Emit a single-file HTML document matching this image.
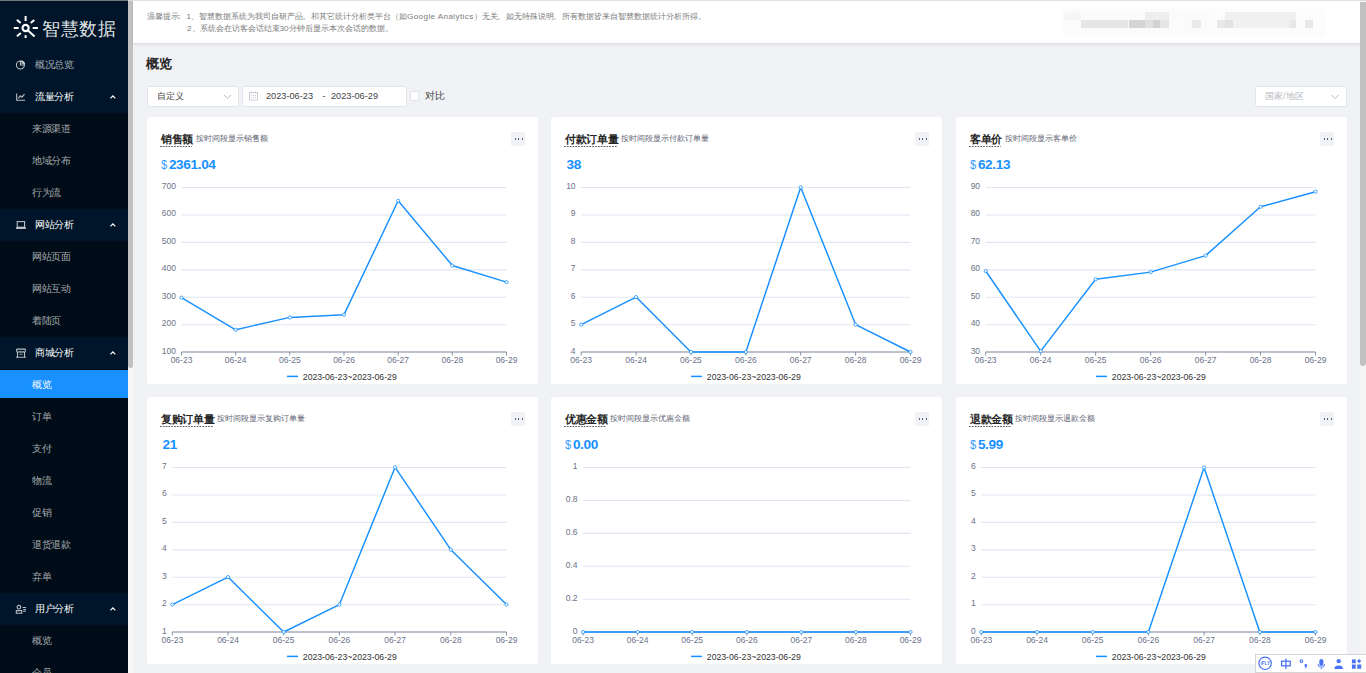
<!DOCTYPE html><html><head><meta charset="utf-8"><title>智慧数据</title><style>
*{box-sizing:border-box;margin:0;padding:0}
html,body{width:1366px;height:673px;overflow:hidden}
body{position:relative;background:#f0f2f5;font-family:"Liberation Sans",sans-serif;color:#262626}
.a{position:absolute;white-space:nowrap}
#topline{left:0;top:0;width:1366px;height:1px;background:rgba(200,200,200,.55);z-index:5}
#side{left:0;top:1px;width:127.5px;height:672px;box-shadow:0 -1px 0 #001529;background:#001529;overflow:hidden}
.sub{position:absolute;left:0;width:128px;background:#000c17}
.mi{position:absolute;left:0;width:128px;height:32px;line-height:32px;font-size:10px;letter-spacing:-0.5px;color:rgba(255,255,255,.65)}
.mt{color:#fff}
.sel{background:#1890ff;color:#fff}
#sscroll{left:127.5px;top:1px;width:5.7px;height:672px;background:#f7f7f7}
#sthumb{left:128px;top:1px;width:5px;height:366.5px;background:#c1c1c1;border-radius:0 0 2.5px 2.5px}
#pscroll{left:1360px;top:1px;width:6px;height:672px;background:#f5f5f5}
#pthumb{left:1360px;top:1.5px;width:6px;height:364px;background:#c1c1c1;border-radius:0 0 3px 3px}
#header{left:133px;top:0;width:1227px;height:44px;background:#fff;border-bottom:1px solid #dcdee2;box-shadow:0 1px 3px rgba(0,21,41,.08)}
.notice{font-size:8.1px;color:#7a7a7a;line-height:12px}.lat{letter-spacing:.4px}.pc{display:inline-block;width:8px;text-align:left}
.card{position:absolute;width:391px;height:267px;background:#fff;border-radius:3px}
.ct{position:absolute;font-size:10.5px;letter-spacing:-0.3px;font-weight:bold;color:#262626;line-height:13px;padding-bottom:0.5px}
.cs{position:absolute;font-size:8px;color:#5f6475;line-height:10px}
.more{position:absolute;width:13.5px;height:14px;background:#f0f2f5;border-radius:1px}
.dot{position:absolute;width:1.3px;height:1.7px;background:#5a6078}
.val{position:absolute;color:#1890ff;font-weight:bold;font-size:13.6px;line-height:14px;letter-spacing:-0.35px}
.dollar{display:inline-block;font-weight:normal;font-size:13.5px;width:6.5px;margin-right:1.8px;color:#3a9bff;letter-spacing:0;transform:scaleX(.82);transform-origin:left center}
svg{position:absolute;left:0;top:0;overflow:visible}
.box{position:absolute;background:#fff;border:1px solid #e3e6eb;border-radius:2px}
</style></head><body>
<div class="a" id="topline"></div>
<div class="a" id="side">
<svg width="128" height="60" style="left:0;top:-1px"><g stroke="#fff" stroke-width="2" fill="none" stroke-linecap="butt"><circle cx="25.6" cy="28" r="3.1" stroke-width="2.1"/><line x1="28" y1="30.5" x2="34.6" y2="36.4"/><line x1="25.6" y1="16" x2="25.6" y2="21"/><line x1="25.6" y1="35.2" x2="25.6" y2="38"/><line x1="13.8" y1="28" x2="18.7" y2="28"/><line x1="32.7" y1="28" x2="37.9" y2="28"/><line x1="16.9" y1="19.8" x2="20.6" y2="23"/><line x1="34.3" y1="20" x2="30.7" y2="23.1"/><line x1="16.9" y1="36.3" x2="20.9" y2="33"/></g></svg>
<div class="a" style="left:42.2px;top:17.8px;font-size:18px;letter-spacing:0.65px;line-height:20px;color:rgba(255,255,255,.9)">智慧数据</div>
<div class="sub" style="top:112px;height:96px"></div>
<div class="sub" style="top:240px;height:96px"></div>
<div class="sub" style="top:368px;height:224px"></div>
<div class="sub" style="top:624px;height:75px"></div>
<svg width="12" height="12" style="left:15px;top:58px" viewBox="0 0 12 12"><g fill="none" stroke="rgba(255,255,255,.72)" stroke-width="1.1"><circle cx="5.4" cy="6" r="4"/><path d="M5.4 2 V6 H9.4"/><path d="M6.4 1.2 A4.6 4.6 0 0 1 10.2 5 H6.4 Z" fill="rgba(255,255,255,.6)" stroke="none"/></g></svg>
<div class="mi" style="top:48px;padding-left:35px">概况总览</div>
<svg width="12" height="12" style="left:15px;top:90px" viewBox="0 0 12 12"><g fill="none" stroke="rgba(255,255,255,.72)" stroke-width="1.1"><path d="M1.7 2.5 V9.3 H10"/><path d="M3.2 7.3 L5.5 4.8 L7 6.2 L9.5 3.2"/></g></svg>
<div class="mi mt" style="top:80px;padding-left:35px">流量分析</div>
<svg width="8" height="6" style="left:108.5px;top:92.5px" viewBox="0 0 8 6"><path d="M1.5 4.4 L3.9 1.9 L6.3 4.4" stroke="#fff" stroke-width="1.2" fill="none"/></svg>
<svg width="12" height="12" style="left:15px;top:218px" viewBox="0 0 12 12"><g fill="none" stroke="rgba(255,255,255,.72)" stroke-width="1.1"><rect x="2.2" y="2.6" width="7.4" height="5.6"/><path d="M1 9.2 H11" stroke-width="1.6"/></g></svg>
<div class="mi mt" style="top:208px;padding-left:35px">网站分析</div>
<svg width="8" height="6" style="left:108.5px;top:220.5px" viewBox="0 0 8 6"><path d="M1.5 4.4 L3.9 1.9 L6.3 4.4" stroke="#fff" stroke-width="1.2" fill="none"/></svg>
<svg width="12" height="12" style="left:15px;top:346px" viewBox="0 0 12 12"><g fill="none" stroke="rgba(255,255,255,.72)" stroke-width="1.1"><path d="M1.6 4.6 V2.6 Q1.6 2.1 2.2 2.1 H9.8 Q10.4 2.1 10.4 2.6 V4.6"/><path d="M1.6 4.6 Q2.8 5.6 4 4.6 Q5.2 5.6 6 4.6 Q7.2 5.6 8.2 4.6 Q9.4 5.6 10.4 4.6"/><path d="M2.5 5.2 V10.2 M9.5 5.2 V10.2 M1 10.3 H11"/><path d="M4.5 7.3 H7.5" stroke-width="0.8"/></g></svg>
<div class="mi mt" style="top:336px;padding-left:35px">商城分析</div>
<svg width="8" height="6" style="left:108.5px;top:348.5px" viewBox="0 0 8 6"><path d="M1.5 4.4 L3.9 1.9 L6.3 4.4" stroke="#fff" stroke-width="1.2" fill="none"/></svg>
<svg width="12" height="12" style="left:15px;top:602px" viewBox="0 0 12 12"><g fill="none" stroke="rgba(255,255,255,.72)" stroke-width="1.1"><circle cx="3.9" cy="4.2" r="1.8"/><path d="M1.3 10.2 V7.6 H6.8 V10.2 Z"/><path d="M7.6 4.5 H11 M8.2 6.5 H11 M8.2 8.3 H11"/></g></svg>
<div class="mi mt" style="top:592px;padding-left:35px">用户分析</div>
<svg width="8" height="6" style="left:108.5px;top:604.5px" viewBox="0 0 8 6"><path d="M1.5 4.4 L3.9 1.9 L6.3 4.4" stroke="#fff" stroke-width="1.2" fill="none"/></svg>
<div class="mi" style="top:112px;padding-left:32px">来源渠道</div>
<div class="mi" style="top:144px;padding-left:32px">地域分布</div>
<div class="mi" style="top:176px;padding-left:32px">行为流</div>
<div class="mi" style="top:240px;padding-left:32px">网站页面</div>
<div class="mi" style="top:272px;padding-left:32px">网站互动</div>
<div class="mi" style="top:304px;padding-left:32px">着陆页</div>
<div class="a sel" style="left:0;top:369px;width:128px;height:28px"></div>
<div class="mi" style="top:368px;padding-left:32px;color:#fff">概览</div>
<div class="mi" style="top:400px;padding-left:32px">订单</div>
<div class="mi" style="top:432px;padding-left:32px">支付</div>
<div class="mi" style="top:464px;padding-left:32px">物流</div>
<div class="mi" style="top:496px;padding-left:32px">促销</div>
<div class="mi" style="top:528px;padding-left:32px">退货退款</div>
<div class="mi" style="top:560px;padding-left:32px">弃单</div>
<div class="mi" style="top:624px;padding-left:32px">概览</div>
<div class="mi" style="top:656px;padding-left:32px">会员</div>
</div>
<div class="a" id="sscroll"></div><div class="a" id="sthumb"></div>
<div class="a" id="header"></div>
<div class="a notice" style="left:146.5px;top:10.5px">温馨提示<span class="pc">:</span>1、智慧数据系统为我司自研产品<span class="pc">,</span>和其它统计分析类平台（如<span class="lat">Google Analytics</span>）无关<span class="pc">,</span>如无特殊说明<span class="pc">,</span>所有数据皆来自智慧数据统计分析所得。</div>
<div class="a notice" style="left:187px;top:22.5px">2、系统会在访客会话结束30分钟后显示本次会话的数据。</div>
<div class="a" style="left:1063px;top:9px;width:147px;height:28px;background:#fbfbfb"></div>
<div class="a" style="left:1210px;top:9px;width:115px;height:28px;background:#fcfcfc"></div>
<div class="a" style="left:1065px;top:12px;width:16px;height:8px;background:#f6f6f6"></div>
<div class="a" style="left:1144.5px;top:12px;width:24.5px;height:8px;background:#eeeeee"></div>
<div class="a" style="left:1225px;top:12px;width:71px;height:8px;background:#f0f0f0"></div>
<div class="a" style="left:1080.8px;top:20px;width:47.7px;height:8px;background:#e6e6e6"></div>
<div class="a" style="left:1128.5px;top:20px;width:16px;height:8px;background:#d5d5d5"></div>
<div class="a" style="left:1144.5px;top:20px;width:8.5px;height:8px;background:#e0e0e0"></div>
<div class="a" style="left:1153px;top:20px;width:7.4px;height:8px;background:#d2d2d2"></div>
<div class="a" style="left:1160.4px;top:20px;width:8.6px;height:8px;background:#e6e6e6"></div>
<div class="a" style="left:1184.8px;top:20px;width:7.2px;height:8px;background:#fafafa"></div>
<div class="a" style="left:1192px;top:20px;width:8.7px;height:8px;background:#eaeaea"></div>
<div class="a" style="left:1216.7px;top:20px;width:8.3px;height:8px;background:#e8e8e8"></div>
<div class="a" style="left:1225px;top:20px;width:7.6px;height:8px;background:#e2e2e2"></div>
<div class="a" style="left:1232.6px;top:20px;width:56.4px;height:8px;background:#f1f1f1"></div>
<div class="a" style="left:1289px;top:20px;width:7px;height:8px;background:#e8e8e8"></div>
<div class="a" style="left:1304.8px;top:20px;width:8.5px;height:8px;background:#e8e8e8"></div>
<div class="a" id="pscroll"></div><div class="a" id="pthumb"></div>
<div class="a" style="left:146px;top:56px;font-size:13px;font-weight:bold;line-height:16px;color:#262626">概览</div>
<div class="box" style="left:146.5px;top:85.5px;width:92px;height:21px"></div>
<div class="a" style="left:157px;top:90px;font-size:9px;line-height:12px;color:#444">自定义</div>
<svg width="10" height="6" style="left:223px;top:93.5px"><path d="M1 1 L4.5 4.3 L8 1" stroke="#b0b4c0" stroke-width="0.9" fill="none"/></svg>
<div class="box" style="left:241.5px;top:85.5px;width:165.5px;height:21px"></div>
<svg width="10" height="10" style="left:249px;top:91px"><g fill="none" stroke="#c0c4cc" stroke-width="0.8"><rect x="0.5" y="1.5" width="8" height="7.5"/><path d="M2.5 0.3 V2 M6.5 0.3 V2"/></g><g fill="#c8ccd4"><rect x="2" y="4" width="1" height="1"/><rect x="4" y="4" width="1" height="1"/><rect x="6" y="4" width="1" height="1"/><rect x="2" y="6" width="1" height="1"/><rect x="4" y="6" width="1" height="1"/><rect x="6" y="6" width="1" height="1"/></g></svg>
<div class="a" style="left:266px;top:90px;font-size:9.2px;line-height:12px;color:#444">2023-06-23</div>
<div class="a" style="left:322.5px;top:90px;font-size:9.2px;line-height:12px;color:#444">-</div>
<div class="a" style="left:331px;top:90px;font-size:9.2px;line-height:12px;color:#444">2023-06-29</div>
<div class="a" style="left:410px;top:91px;width:8.5px;height:9.8px;background:#fff;border:1px solid #e1e3e8;border-radius:1px"></div>
<div class="a" style="left:425px;top:89.5px;font-size:10px;line-height:12px;color:#444">对比</div>
<div class="box" style="left:1255px;top:85.5px;width:92px;height:21px"></div>
<div class="a" style="left:1265px;top:90px;font-size:9px;line-height:12px;color:#b5b8bf">国家/地区</div>
<svg width="10" height="6" style="left:1330px;top:94px"><path d="M1 1 L5 4.5 L9 1" stroke="#b8bcc6" stroke-width="0.9" fill="none"/></svg>
<div class="card" style="left:147px;top:117px"></div>
<div class="ct" style="left:161px;top:133px">销售额</div>
<svg width="32.8" height="3" style="left:160.1px;top:145px"><line x1="0" y1="1.5" x2="31.799999999999994" y2="1.5" stroke="#5c5c5c" stroke-width="1" stroke-dasharray="1.7 1.13"/></svg>
<div class="cs" style="left:195.6px;top:134px">按时间段显示销售额</div>
<div class="more" style="left:511px;top:132px"></div>
<div class="dot" style="left:514.5px;top:138.3px"></div>
<div class="dot" style="left:518.0px;top:138.3px"></div>
<div class="dot" style="left:521.5px;top:138.3px"></div>
<div class="val" style="left:160.6px;top:158px"><span class="dollar">$</span>2361.04</div>
<svg width="1366" height="673" style="left:0;top:0;pointer-events:none"><text x="175.90" y="353.50" font-size="8.5" fill="#6c7288" text-anchor="end" font-family="Liberation Sans">100</text><line x1="181.50" y1="324.75" x2="506.50" y2="324.75" stroke="#e0e6f1" stroke-width="1.1"/><text x="175.90" y="326.05" font-size="8.5" fill="#6c7288" text-anchor="end" font-family="Liberation Sans">200</text><line x1="181.50" y1="297.30" x2="506.50" y2="297.30" stroke="#e0e6f1" stroke-width="1.1"/><text x="175.90" y="298.60" font-size="8.5" fill="#6c7288" text-anchor="end" font-family="Liberation Sans">300</text><line x1="181.50" y1="269.85" x2="506.50" y2="269.85" stroke="#e0e6f1" stroke-width="1.1"/><text x="175.90" y="271.15" font-size="8.5" fill="#6c7288" text-anchor="end" font-family="Liberation Sans">400</text><line x1="181.50" y1="242.40" x2="506.50" y2="242.40" stroke="#e0e6f1" stroke-width="1.1"/><text x="175.90" y="243.70" font-size="8.5" fill="#6c7288" text-anchor="end" font-family="Liberation Sans">500</text><line x1="181.50" y1="214.95" x2="506.50" y2="214.95" stroke="#e0e6f1" stroke-width="1.1"/><text x="175.90" y="216.25" font-size="8.5" fill="#6c7288" text-anchor="end" font-family="Liberation Sans">600</text><line x1="181.50" y1="187.50" x2="506.50" y2="187.50" stroke="#e0e6f1" stroke-width="1.1"/><text x="175.90" y="188.80" font-size="8.5" fill="#6c7288" text-anchor="end" font-family="Liberation Sans">700</text><line x1="181.50" y1="352.00" x2="506.50" y2="352.00" stroke="#7a8399" stroke-width="1"/><line x1="181.50" y1="352.00" x2="181.50" y2="355.50" stroke="#7a8399" stroke-width="0.9"/><text x="181.50" y="363.00" font-size="8.5" fill="#6c7288" text-anchor="middle" font-family="Liberation Sans">06-23</text><line x1="235.67" y1="352.00" x2="235.67" y2="355.50" stroke="#7a8399" stroke-width="0.9"/><text x="235.67" y="363.00" font-size="8.5" fill="#6c7288" text-anchor="middle" font-family="Liberation Sans">06-24</text><line x1="289.83" y1="352.00" x2="289.83" y2="355.50" stroke="#7a8399" stroke-width="0.9"/><text x="289.83" y="363.00" font-size="8.5" fill="#6c7288" text-anchor="middle" font-family="Liberation Sans">06-25</text><line x1="344.00" y1="352.00" x2="344.00" y2="355.50" stroke="#7a8399" stroke-width="0.9"/><text x="344.00" y="363.00" font-size="8.5" fill="#6c7288" text-anchor="middle" font-family="Liberation Sans">06-26</text><line x1="398.17" y1="352.00" x2="398.17" y2="355.50" stroke="#7a8399" stroke-width="0.9"/><text x="398.17" y="363.00" font-size="8.5" fill="#6c7288" text-anchor="middle" font-family="Liberation Sans">06-27</text><line x1="452.33" y1="352.00" x2="452.33" y2="355.50" stroke="#7a8399" stroke-width="0.9"/><text x="452.33" y="363.00" font-size="8.5" fill="#6c7288" text-anchor="middle" font-family="Liberation Sans">06-28</text><line x1="506.50" y1="352.00" x2="506.50" y2="355.50" stroke="#7a8399" stroke-width="0.9"/><text x="506.50" y="363.00" font-size="8.5" fill="#6c7288" text-anchor="middle" font-family="Liberation Sans">06-29</text><polyline points="181.50,297.65 235.67,329.77 289.83,317.41 344.00,314.67 398.17,200.75 452.33,265.53 506.50,282.14" fill="none" stroke="#1890ff" stroke-width="1.45" stroke-linejoin="bevel"/><circle cx="181.50" cy="297.65" r="1.6" fill="#fff" stroke="#1890ff" stroke-width="0.8"/><circle cx="235.67" cy="329.77" r="1.6" fill="#fff" stroke="#1890ff" stroke-width="0.8"/><circle cx="289.83" cy="317.41" r="1.6" fill="#fff" stroke="#1890ff" stroke-width="0.8"/><circle cx="344.00" cy="314.67" r="1.6" fill="#fff" stroke="#1890ff" stroke-width="0.8"/><circle cx="398.17" cy="200.75" r="1.6" fill="#fff" stroke="#1890ff" stroke-width="0.8"/><circle cx="452.33" cy="265.53" r="1.6" fill="#fff" stroke="#1890ff" stroke-width="0.8"/><circle cx="506.50" cy="282.14" r="1.6" fill="#fff" stroke="#1890ff" stroke-width="0.8"/><line x1="287.00" y1="376.40" x2="298.00" y2="376.40" stroke="#1890ff" stroke-width="1.5"/><text x="302.80" y="379.50" font-size="8.7" fill="#333" font-family="Liberation Sans">2023-06-23~2023-06-29</text></svg>
<div class="card" style="left:551px;top:117px"></div>
<div class="ct" style="left:565px;top:133px">付款订单量</div>
<svg width="54.2" height="3" style="left:564.1px;top:145px"><line x1="0" y1="1.5" x2="53.2" y2="1.5" stroke="#5c5c5c" stroke-width="1" stroke-dasharray="1.7 1.13"/></svg>
<div class="cs" style="left:621.0px;top:134px">按时间段显示付款订单量</div>
<div class="more" style="left:915px;top:132px"></div>
<div class="dot" style="left:918.5px;top:138.3px"></div>
<div class="dot" style="left:922.0px;top:138.3px"></div>
<div class="dot" style="left:925.5px;top:138.3px"></div>
<div class="val" style="left:566.5px;top:158px">38</div>
<svg width="1366" height="673" style="left:0;top:0;pointer-events:none"><text x="575.60" y="353.50" font-size="8.5" fill="#6c7288" text-anchor="end" font-family="Liberation Sans">4</text><line x1="581.20" y1="324.75" x2="910.50" y2="324.75" stroke="#e0e6f1" stroke-width="1.1"/><text x="575.60" y="326.05" font-size="8.5" fill="#6c7288" text-anchor="end" font-family="Liberation Sans">5</text><line x1="581.20" y1="297.30" x2="910.50" y2="297.30" stroke="#e0e6f1" stroke-width="1.1"/><text x="575.60" y="298.60" font-size="8.5" fill="#6c7288" text-anchor="end" font-family="Liberation Sans">6</text><line x1="581.20" y1="269.85" x2="910.50" y2="269.85" stroke="#e0e6f1" stroke-width="1.1"/><text x="575.60" y="271.15" font-size="8.5" fill="#6c7288" text-anchor="end" font-family="Liberation Sans">7</text><line x1="581.20" y1="242.40" x2="910.50" y2="242.40" stroke="#e0e6f1" stroke-width="1.1"/><text x="575.60" y="243.70" font-size="8.5" fill="#6c7288" text-anchor="end" font-family="Liberation Sans">8</text><line x1="581.20" y1="214.95" x2="910.50" y2="214.95" stroke="#e0e6f1" stroke-width="1.1"/><text x="575.60" y="216.25" font-size="8.5" fill="#6c7288" text-anchor="end" font-family="Liberation Sans">9</text><line x1="581.20" y1="187.50" x2="910.50" y2="187.50" stroke="#e0e6f1" stroke-width="1.1"/><text x="575.60" y="188.80" font-size="8.5" fill="#6c7288" text-anchor="end" font-family="Liberation Sans">10</text><line x1="581.20" y1="352.00" x2="910.50" y2="352.00" stroke="#7a8399" stroke-width="1"/><line x1="581.20" y1="352.00" x2="581.20" y2="355.50" stroke="#7a8399" stroke-width="0.9"/><text x="581.20" y="363.00" font-size="8.5" fill="#6c7288" text-anchor="middle" font-family="Liberation Sans">06-23</text><line x1="636.08" y1="352.00" x2="636.08" y2="355.50" stroke="#7a8399" stroke-width="0.9"/><text x="636.08" y="363.00" font-size="8.5" fill="#6c7288" text-anchor="middle" font-family="Liberation Sans">06-24</text><line x1="690.97" y1="352.00" x2="690.97" y2="355.50" stroke="#7a8399" stroke-width="0.9"/><text x="690.97" y="363.00" font-size="8.5" fill="#6c7288" text-anchor="middle" font-family="Liberation Sans">06-25</text><line x1="745.85" y1="352.00" x2="745.85" y2="355.50" stroke="#7a8399" stroke-width="0.9"/><text x="745.85" y="363.00" font-size="8.5" fill="#6c7288" text-anchor="middle" font-family="Liberation Sans">06-26</text><line x1="800.73" y1="352.00" x2="800.73" y2="355.50" stroke="#7a8399" stroke-width="0.9"/><text x="800.73" y="363.00" font-size="8.5" fill="#6c7288" text-anchor="middle" font-family="Liberation Sans">06-27</text><line x1="855.62" y1="352.00" x2="855.62" y2="355.50" stroke="#7a8399" stroke-width="0.9"/><text x="855.62" y="363.00" font-size="8.5" fill="#6c7288" text-anchor="middle" font-family="Liberation Sans">06-28</text><line x1="910.50" y1="352.00" x2="910.50" y2="355.50" stroke="#7a8399" stroke-width="0.9"/><text x="910.50" y="363.00" font-size="8.5" fill="#6c7288" text-anchor="middle" font-family="Liberation Sans">06-29</text><polyline points="581.20,324.55 636.08,297.10 690.97,352.00 745.85,352.00 800.73,187.30 855.62,324.55 910.50,352.00" fill="none" stroke="#1890ff" stroke-width="1.45" stroke-linejoin="bevel"/><circle cx="581.20" cy="324.55" r="1.6" fill="#fff" stroke="#1890ff" stroke-width="0.8"/><circle cx="636.08" cy="297.10" r="1.6" fill="#fff" stroke="#1890ff" stroke-width="0.8"/><circle cx="690.97" cy="352.00" r="1.6" fill="#fff" stroke="#1890ff" stroke-width="0.8"/><circle cx="745.85" cy="352.00" r="1.6" fill="#fff" stroke="#1890ff" stroke-width="0.8"/><circle cx="800.73" cy="187.30" r="1.6" fill="#fff" stroke="#1890ff" stroke-width="0.8"/><circle cx="855.62" cy="324.55" r="1.6" fill="#fff" stroke="#1890ff" stroke-width="0.8"/><circle cx="910.50" cy="352.00" r="1.6" fill="#fff" stroke="#1890ff" stroke-width="0.8"/><line x1="691.00" y1="376.40" x2="702.00" y2="376.40" stroke="#1890ff" stroke-width="1.5"/><text x="706.80" y="379.50" font-size="8.7" fill="#333" font-family="Liberation Sans">2023-06-23~2023-06-29</text></svg>
<div class="card" style="left:956px;top:117px"></div>
<div class="ct" style="left:970px;top:133px">客单价</div>
<svg width="32.8" height="3" style="left:969.1px;top:145px"><line x1="0" y1="1.5" x2="31.799999999999994" y2="1.5" stroke="#5c5c5c" stroke-width="1" stroke-dasharray="1.7 1.13"/></svg>
<div class="cs" style="left:1004.6px;top:134px">按时间段显示客单价</div>
<div class="more" style="left:1320px;top:132px"></div>
<div class="dot" style="left:1323.5px;top:138.3px"></div>
<div class="dot" style="left:1327.0px;top:138.3px"></div>
<div class="dot" style="left:1330.5px;top:138.3px"></div>
<div class="val" style="left:969.6px;top:158px"><span class="dollar">$</span>62.13</div>
<svg width="1366" height="673" style="left:0;top:0;pointer-events:none"><text x="980.10" y="353.50" font-size="8.5" fill="#6c7288" text-anchor="end" font-family="Liberation Sans">30</text><line x1="985.70" y1="324.75" x2="1315.50" y2="324.75" stroke="#e0e6f1" stroke-width="1.1"/><text x="980.10" y="326.05" font-size="8.5" fill="#6c7288" text-anchor="end" font-family="Liberation Sans">40</text><line x1="985.70" y1="297.30" x2="1315.50" y2="297.30" stroke="#e0e6f1" stroke-width="1.1"/><text x="980.10" y="298.60" font-size="8.5" fill="#6c7288" text-anchor="end" font-family="Liberation Sans">50</text><line x1="985.70" y1="269.85" x2="1315.50" y2="269.85" stroke="#e0e6f1" stroke-width="1.1"/><text x="980.10" y="271.15" font-size="8.5" fill="#6c7288" text-anchor="end" font-family="Liberation Sans">60</text><line x1="985.70" y1="242.40" x2="1315.50" y2="242.40" stroke="#e0e6f1" stroke-width="1.1"/><text x="980.10" y="243.70" font-size="8.5" fill="#6c7288" text-anchor="end" font-family="Liberation Sans">70</text><line x1="985.70" y1="214.95" x2="1315.50" y2="214.95" stroke="#e0e6f1" stroke-width="1.1"/><text x="980.10" y="216.25" font-size="8.5" fill="#6c7288" text-anchor="end" font-family="Liberation Sans">80</text><line x1="985.70" y1="187.50" x2="1315.50" y2="187.50" stroke="#e0e6f1" stroke-width="1.1"/><text x="980.10" y="188.80" font-size="8.5" fill="#6c7288" text-anchor="end" font-family="Liberation Sans">90</text><line x1="985.70" y1="352.00" x2="1315.50" y2="352.00" stroke="#7a8399" stroke-width="1"/><line x1="985.70" y1="352.00" x2="985.70" y2="355.50" stroke="#7a8399" stroke-width="0.9"/><text x="985.70" y="363.00" font-size="8.5" fill="#6c7288" text-anchor="middle" font-family="Liberation Sans">06-23</text><line x1="1040.67" y1="352.00" x2="1040.67" y2="355.50" stroke="#7a8399" stroke-width="0.9"/><text x="1040.67" y="363.00" font-size="8.5" fill="#6c7288" text-anchor="middle" font-family="Liberation Sans">06-24</text><line x1="1095.63" y1="352.00" x2="1095.63" y2="355.50" stroke="#7a8399" stroke-width="0.9"/><text x="1095.63" y="363.00" font-size="8.5" fill="#6c7288" text-anchor="middle" font-family="Liberation Sans">06-25</text><line x1="1150.60" y1="352.00" x2="1150.60" y2="355.50" stroke="#7a8399" stroke-width="0.9"/><text x="1150.60" y="363.00" font-size="8.5" fill="#6c7288" text-anchor="middle" font-family="Liberation Sans">06-26</text><line x1="1205.57" y1="352.00" x2="1205.57" y2="355.50" stroke="#7a8399" stroke-width="0.9"/><text x="1205.57" y="363.00" font-size="8.5" fill="#6c7288" text-anchor="middle" font-family="Liberation Sans">06-27</text><line x1="1260.53" y1="352.00" x2="1260.53" y2="355.50" stroke="#7a8399" stroke-width="0.9"/><text x="1260.53" y="363.00" font-size="8.5" fill="#6c7288" text-anchor="middle" font-family="Liberation Sans">06-28</text><line x1="1315.50" y1="352.00" x2="1315.50" y2="355.50" stroke="#7a8399" stroke-width="0.9"/><text x="1315.50" y="363.00" font-size="8.5" fill="#6c7288" text-anchor="middle" font-family="Liberation Sans">06-29</text><polyline points="985.70,271.02 1040.67,351.18 1095.63,279.26 1150.60,272.12 1205.57,255.65 1260.53,206.79 1315.50,191.69" fill="none" stroke="#1890ff" stroke-width="1.45" stroke-linejoin="bevel"/><circle cx="985.70" cy="271.02" r="1.6" fill="#fff" stroke="#1890ff" stroke-width="0.8"/><circle cx="1040.67" cy="351.18" r="1.6" fill="#fff" stroke="#1890ff" stroke-width="0.8"/><circle cx="1095.63" cy="279.26" r="1.6" fill="#fff" stroke="#1890ff" stroke-width="0.8"/><circle cx="1150.60" cy="272.12" r="1.6" fill="#fff" stroke="#1890ff" stroke-width="0.8"/><circle cx="1205.57" cy="255.65" r="1.6" fill="#fff" stroke="#1890ff" stroke-width="0.8"/><circle cx="1260.53" cy="206.79" r="1.6" fill="#fff" stroke="#1890ff" stroke-width="0.8"/><circle cx="1315.50" cy="191.69" r="1.6" fill="#fff" stroke="#1890ff" stroke-width="0.8"/><line x1="1096.00" y1="376.40" x2="1107.00" y2="376.40" stroke="#1890ff" stroke-width="1.5"/><text x="1111.80" y="379.50" font-size="8.7" fill="#333" font-family="Liberation Sans">2023-06-23~2023-06-29</text></svg>
<div class="card" style="left:147px;top:397px"></div>
<div class="ct" style="left:161px;top:413px">复购订单量</div>
<svg width="54.2" height="3" style="left:160.1px;top:425px"><line x1="0" y1="1.5" x2="53.2" y2="1.5" stroke="#5c5c5c" stroke-width="1" stroke-dasharray="1.7 1.13"/></svg>
<div class="cs" style="left:217.0px;top:414px">按时间段显示复购订单量</div>
<div class="more" style="left:511px;top:412px"></div>
<div class="dot" style="left:514.5px;top:418.3px"></div>
<div class="dot" style="left:518.0px;top:418.3px"></div>
<div class="dot" style="left:521.5px;top:418.3px"></div>
<div class="val" style="left:162.5px;top:438px">21</div>
<svg width="1366" height="673" style="left:0;top:0;pointer-events:none"><text x="166.70" y="633.50" font-size="8.5" fill="#6c7288" text-anchor="end" font-family="Liberation Sans">1</text><line x1="172.30" y1="604.75" x2="506.50" y2="604.75" stroke="#e0e6f1" stroke-width="1.1"/><text x="166.70" y="606.05" font-size="8.5" fill="#6c7288" text-anchor="end" font-family="Liberation Sans">2</text><line x1="172.30" y1="577.30" x2="506.50" y2="577.30" stroke="#e0e6f1" stroke-width="1.1"/><text x="166.70" y="578.60" font-size="8.5" fill="#6c7288" text-anchor="end" font-family="Liberation Sans">3</text><line x1="172.30" y1="549.85" x2="506.50" y2="549.85" stroke="#e0e6f1" stroke-width="1.1"/><text x="166.70" y="551.15" font-size="8.5" fill="#6c7288" text-anchor="end" font-family="Liberation Sans">4</text><line x1="172.30" y1="522.40" x2="506.50" y2="522.40" stroke="#e0e6f1" stroke-width="1.1"/><text x="166.70" y="523.70" font-size="8.5" fill="#6c7288" text-anchor="end" font-family="Liberation Sans">5</text><line x1="172.30" y1="494.95" x2="506.50" y2="494.95" stroke="#e0e6f1" stroke-width="1.1"/><text x="166.70" y="496.25" font-size="8.5" fill="#6c7288" text-anchor="end" font-family="Liberation Sans">6</text><line x1="172.30" y1="467.50" x2="506.50" y2="467.50" stroke="#e0e6f1" stroke-width="1.1"/><text x="166.70" y="468.80" font-size="8.5" fill="#6c7288" text-anchor="end" font-family="Liberation Sans">7</text><line x1="172.30" y1="632.00" x2="506.50" y2="632.00" stroke="#7a8399" stroke-width="1"/><line x1="172.30" y1="632.00" x2="172.30" y2="635.50" stroke="#7a8399" stroke-width="0.9"/><text x="172.30" y="643.00" font-size="8.5" fill="#6c7288" text-anchor="middle" font-family="Liberation Sans">06-23</text><line x1="228.00" y1="632.00" x2="228.00" y2="635.50" stroke="#7a8399" stroke-width="0.9"/><text x="228.00" y="643.00" font-size="8.5" fill="#6c7288" text-anchor="middle" font-family="Liberation Sans">06-24</text><line x1="283.70" y1="632.00" x2="283.70" y2="635.50" stroke="#7a8399" stroke-width="0.9"/><text x="283.70" y="643.00" font-size="8.5" fill="#6c7288" text-anchor="middle" font-family="Liberation Sans">06-25</text><line x1="339.40" y1="632.00" x2="339.40" y2="635.50" stroke="#7a8399" stroke-width="0.9"/><text x="339.40" y="643.00" font-size="8.5" fill="#6c7288" text-anchor="middle" font-family="Liberation Sans">06-26</text><line x1="395.10" y1="632.00" x2="395.10" y2="635.50" stroke="#7a8399" stroke-width="0.9"/><text x="395.10" y="643.00" font-size="8.5" fill="#6c7288" text-anchor="middle" font-family="Liberation Sans">06-27</text><line x1="450.80" y1="632.00" x2="450.80" y2="635.50" stroke="#7a8399" stroke-width="0.9"/><text x="450.80" y="643.00" font-size="8.5" fill="#6c7288" text-anchor="middle" font-family="Liberation Sans">06-28</text><line x1="506.50" y1="632.00" x2="506.50" y2="635.50" stroke="#7a8399" stroke-width="0.9"/><text x="506.50" y="643.00" font-size="8.5" fill="#6c7288" text-anchor="middle" font-family="Liberation Sans">06-29</text><polyline points="172.30,604.55 228.00,577.10 283.70,632.00 339.40,604.55 395.10,467.30 450.80,549.65 506.50,604.55" fill="none" stroke="#1890ff" stroke-width="1.45" stroke-linejoin="bevel"/><circle cx="172.30" cy="604.55" r="1.6" fill="#fff" stroke="#1890ff" stroke-width="0.8"/><circle cx="228.00" cy="577.10" r="1.6" fill="#fff" stroke="#1890ff" stroke-width="0.8"/><circle cx="283.70" cy="632.00" r="1.6" fill="#fff" stroke="#1890ff" stroke-width="0.8"/><circle cx="339.40" cy="604.55" r="1.6" fill="#fff" stroke="#1890ff" stroke-width="0.8"/><circle cx="395.10" cy="467.30" r="1.6" fill="#fff" stroke="#1890ff" stroke-width="0.8"/><circle cx="450.80" cy="549.65" r="1.6" fill="#fff" stroke="#1890ff" stroke-width="0.8"/><circle cx="506.50" cy="604.55" r="1.6" fill="#fff" stroke="#1890ff" stroke-width="0.8"/><line x1="287.00" y1="656.40" x2="298.00" y2="656.40" stroke="#1890ff" stroke-width="1.5"/><text x="302.80" y="659.50" font-size="8.7" fill="#333" font-family="Liberation Sans">2023-06-23~2023-06-29</text></svg>
<div class="card" style="left:551px;top:397px"></div>
<div class="ct" style="left:565px;top:413px">优惠金额</div>
<svg width="43.5" height="3" style="left:564.1px;top:425px"><line x1="0" y1="1.5" x2="42.5" y2="1.5" stroke="#5c5c5c" stroke-width="1" stroke-dasharray="1.7 1.13"/></svg>
<div class="cs" style="left:610.3px;top:414px">按时间段显示优惠金额</div>
<div class="more" style="left:915px;top:412px"></div>
<div class="dot" style="left:918.5px;top:418.3px"></div>
<div class="dot" style="left:922.0px;top:418.3px"></div>
<div class="dot" style="left:925.5px;top:418.3px"></div>
<div class="val" style="left:564.6px;top:438px"><span class="dollar">$</span>0.00</div>
<svg width="1366" height="673" style="left:0;top:0;pointer-events:none"><text x="577.50" y="633.50" font-size="8.5" fill="#6c7288" text-anchor="end" font-family="Liberation Sans">0</text><line x1="583.10" y1="599.26" x2="910.50" y2="599.26" stroke="#e0e6f1" stroke-width="1.1"/><text x="577.50" y="600.56" font-size="8.5" fill="#6c7288" text-anchor="end" font-family="Liberation Sans">0.2</text><line x1="583.10" y1="566.32" x2="910.50" y2="566.32" stroke="#e0e6f1" stroke-width="1.1"/><text x="577.50" y="567.62" font-size="8.5" fill="#6c7288" text-anchor="end" font-family="Liberation Sans">0.4</text><line x1="583.10" y1="533.38" x2="910.50" y2="533.38" stroke="#e0e6f1" stroke-width="1.1"/><text x="577.50" y="534.68" font-size="8.5" fill="#6c7288" text-anchor="end" font-family="Liberation Sans">0.6</text><line x1="583.10" y1="500.44" x2="910.50" y2="500.44" stroke="#e0e6f1" stroke-width="1.1"/><text x="577.50" y="501.74" font-size="8.5" fill="#6c7288" text-anchor="end" font-family="Liberation Sans">0.8</text><line x1="583.10" y1="467.50" x2="910.50" y2="467.50" stroke="#e0e6f1" stroke-width="1.1"/><text x="577.50" y="468.80" font-size="8.5" fill="#6c7288" text-anchor="end" font-family="Liberation Sans">1</text><line x1="583.10" y1="632.00" x2="910.50" y2="632.00" stroke="#7a8399" stroke-width="1"/><line x1="583.10" y1="632.00" x2="583.10" y2="635.50" stroke="#7a8399" stroke-width="0.9"/><text x="583.10" y="643.00" font-size="8.5" fill="#6c7288" text-anchor="middle" font-family="Liberation Sans">06-23</text><line x1="637.67" y1="632.00" x2="637.67" y2="635.50" stroke="#7a8399" stroke-width="0.9"/><text x="637.67" y="643.00" font-size="8.5" fill="#6c7288" text-anchor="middle" font-family="Liberation Sans">06-24</text><line x1="692.23" y1="632.00" x2="692.23" y2="635.50" stroke="#7a8399" stroke-width="0.9"/><text x="692.23" y="643.00" font-size="8.5" fill="#6c7288" text-anchor="middle" font-family="Liberation Sans">06-25</text><line x1="746.80" y1="632.00" x2="746.80" y2="635.50" stroke="#7a8399" stroke-width="0.9"/><text x="746.80" y="643.00" font-size="8.5" fill="#6c7288" text-anchor="middle" font-family="Liberation Sans">06-26</text><line x1="801.37" y1="632.00" x2="801.37" y2="635.50" stroke="#7a8399" stroke-width="0.9"/><text x="801.37" y="643.00" font-size="8.5" fill="#6c7288" text-anchor="middle" font-family="Liberation Sans">06-27</text><line x1="855.93" y1="632.00" x2="855.93" y2="635.50" stroke="#7a8399" stroke-width="0.9"/><text x="855.93" y="643.00" font-size="8.5" fill="#6c7288" text-anchor="middle" font-family="Liberation Sans">06-28</text><line x1="910.50" y1="632.00" x2="910.50" y2="635.50" stroke="#7a8399" stroke-width="0.9"/><text x="910.50" y="643.00" font-size="8.5" fill="#6c7288" text-anchor="middle" font-family="Liberation Sans">06-29</text><polyline points="583.10,632.00 637.67,632.00 692.23,632.00 746.80,632.00 801.37,632.00 855.93,632.00 910.50,632.00" fill="none" stroke="#1890ff" stroke-width="1.45" stroke-linejoin="bevel"/><circle cx="583.10" cy="632.00" r="1.6" fill="#fff" stroke="#1890ff" stroke-width="0.8"/><circle cx="637.67" cy="632.00" r="1.6" fill="#fff" stroke="#1890ff" stroke-width="0.8"/><circle cx="692.23" cy="632.00" r="1.6" fill="#fff" stroke="#1890ff" stroke-width="0.8"/><circle cx="746.80" cy="632.00" r="1.6" fill="#fff" stroke="#1890ff" stroke-width="0.8"/><circle cx="801.37" cy="632.00" r="1.6" fill="#fff" stroke="#1890ff" stroke-width="0.8"/><circle cx="855.93" cy="632.00" r="1.6" fill="#fff" stroke="#1890ff" stroke-width="0.8"/><circle cx="910.50" cy="632.00" r="1.6" fill="#fff" stroke="#1890ff" stroke-width="0.8"/><line x1="691.00" y1="656.40" x2="702.00" y2="656.40" stroke="#1890ff" stroke-width="1.5"/><text x="706.80" y="659.50" font-size="8.7" fill="#333" font-family="Liberation Sans">2023-06-23~2023-06-29</text></svg>
<div class="card" style="left:956px;top:397px"></div>
<div class="ct" style="left:970px;top:413px">退款金额</div>
<svg width="43.5" height="3" style="left:969.1px;top:425px"><line x1="0" y1="1.5" x2="42.5" y2="1.5" stroke="#5c5c5c" stroke-width="1" stroke-dasharray="1.7 1.13"/></svg>
<div class="cs" style="left:1015.3px;top:414px">按时间段显示退款金额</div>
<div class="more" style="left:1320px;top:412px"></div>
<div class="dot" style="left:1323.5px;top:418.3px"></div>
<div class="dot" style="left:1327.0px;top:418.3px"></div>
<div class="dot" style="left:1330.5px;top:418.3px"></div>
<div class="val" style="left:969.6px;top:438px"><span class="dollar">$</span>5.99</div>
<svg width="1366" height="673" style="left:0;top:0;pointer-events:none"><text x="975.70" y="633.50" font-size="8.5" fill="#6c7288" text-anchor="end" font-family="Liberation Sans">0</text><line x1="981.30" y1="604.75" x2="1315.50" y2="604.75" stroke="#e0e6f1" stroke-width="1.1"/><text x="975.70" y="606.05" font-size="8.5" fill="#6c7288" text-anchor="end" font-family="Liberation Sans">1</text><line x1="981.30" y1="577.30" x2="1315.50" y2="577.30" stroke="#e0e6f1" stroke-width="1.1"/><text x="975.70" y="578.60" font-size="8.5" fill="#6c7288" text-anchor="end" font-family="Liberation Sans">2</text><line x1="981.30" y1="549.85" x2="1315.50" y2="549.85" stroke="#e0e6f1" stroke-width="1.1"/><text x="975.70" y="551.15" font-size="8.5" fill="#6c7288" text-anchor="end" font-family="Liberation Sans">3</text><line x1="981.30" y1="522.40" x2="1315.50" y2="522.40" stroke="#e0e6f1" stroke-width="1.1"/><text x="975.70" y="523.70" font-size="8.5" fill="#6c7288" text-anchor="end" font-family="Liberation Sans">4</text><line x1="981.30" y1="494.95" x2="1315.50" y2="494.95" stroke="#e0e6f1" stroke-width="1.1"/><text x="975.70" y="496.25" font-size="8.5" fill="#6c7288" text-anchor="end" font-family="Liberation Sans">5</text><line x1="981.30" y1="467.50" x2="1315.50" y2="467.50" stroke="#e0e6f1" stroke-width="1.1"/><text x="975.70" y="468.80" font-size="8.5" fill="#6c7288" text-anchor="end" font-family="Liberation Sans">6</text><line x1="981.30" y1="632.00" x2="1315.50" y2="632.00" stroke="#7a8399" stroke-width="1"/><line x1="981.30" y1="632.00" x2="981.30" y2="635.50" stroke="#7a8399" stroke-width="0.9"/><text x="981.30" y="643.00" font-size="8.5" fill="#6c7288" text-anchor="middle" font-family="Liberation Sans">06-23</text><line x1="1037.00" y1="632.00" x2="1037.00" y2="635.50" stroke="#7a8399" stroke-width="0.9"/><text x="1037.00" y="643.00" font-size="8.5" fill="#6c7288" text-anchor="middle" font-family="Liberation Sans">06-24</text><line x1="1092.70" y1="632.00" x2="1092.70" y2="635.50" stroke="#7a8399" stroke-width="0.9"/><text x="1092.70" y="643.00" font-size="8.5" fill="#6c7288" text-anchor="middle" font-family="Liberation Sans">06-25</text><line x1="1148.40" y1="632.00" x2="1148.40" y2="635.50" stroke="#7a8399" stroke-width="0.9"/><text x="1148.40" y="643.00" font-size="8.5" fill="#6c7288" text-anchor="middle" font-family="Liberation Sans">06-26</text><line x1="1204.10" y1="632.00" x2="1204.10" y2="635.50" stroke="#7a8399" stroke-width="0.9"/><text x="1204.10" y="643.00" font-size="8.5" fill="#6c7288" text-anchor="middle" font-family="Liberation Sans">06-27</text><line x1="1259.80" y1="632.00" x2="1259.80" y2="635.50" stroke="#7a8399" stroke-width="0.9"/><text x="1259.80" y="643.00" font-size="8.5" fill="#6c7288" text-anchor="middle" font-family="Liberation Sans">06-28</text><line x1="1315.50" y1="632.00" x2="1315.50" y2="635.50" stroke="#7a8399" stroke-width="0.9"/><text x="1315.50" y="643.00" font-size="8.5" fill="#6c7288" text-anchor="middle" font-family="Liberation Sans">06-29</text><polyline points="981.30,632.00 1037.00,632.00 1092.70,632.00 1148.40,632.00 1204.10,467.57 1259.80,632.00 1315.50,632.00" fill="none" stroke="#1890ff" stroke-width="1.45" stroke-linejoin="bevel"/><circle cx="981.30" cy="632.00" r="1.6" fill="#fff" stroke="#1890ff" stroke-width="0.8"/><circle cx="1037.00" cy="632.00" r="1.6" fill="#fff" stroke="#1890ff" stroke-width="0.8"/><circle cx="1092.70" cy="632.00" r="1.6" fill="#fff" stroke="#1890ff" stroke-width="0.8"/><circle cx="1148.40" cy="632.00" r="1.6" fill="#fff" stroke="#1890ff" stroke-width="0.8"/><circle cx="1204.10" cy="467.57" r="1.6" fill="#fff" stroke="#1890ff" stroke-width="0.8"/><circle cx="1259.80" cy="632.00" r="1.6" fill="#fff" stroke="#1890ff" stroke-width="0.8"/><circle cx="1315.50" cy="632.00" r="1.6" fill="#fff" stroke="#1890ff" stroke-width="0.8"/><line x1="1096.00" y1="656.40" x2="1107.00" y2="656.40" stroke="#1890ff" stroke-width="1.5"/><text x="1111.80" y="659.50" font-size="8.7" fill="#333" font-family="Liberation Sans">2023-06-23~2023-06-29</text></svg>
<div class="a" style="left:1255px;top:654px;width:111px;height:19px;background:#fff;border:1px solid #d5d5d5;border-right:none"></div>
<svg width="1366" height="673" style="left:0;top:0"><g fill="#4a73f5" stroke="#4a73f5"><circle cx="1265.1" cy="663.3" r="6.2" fill="none" stroke-width="1.2"/><text x="1265.3" y="665.1" font-size="4.6" font-weight="bold" text-anchor="middle" stroke="none" font-family="Liberation Sans">iFLY</text><rect x="1281.6" y="661.2" width="8.6" height="4.6" fill="none" stroke-width="1.3"/><line x1="1285.9" y1="658.5" x2="1285.9" y2="669" stroke-width="1.3"/><circle cx="1301.4" cy="661.1" r="1.3" fill="none" stroke-width="1.1"/><circle cx="1305.8" cy="665.4" r="1.3" stroke="none"/><path d="M1306.5 665.6 L1305.3 668.3" stroke-width="1"/><rect x="1319.3" y="659" width="4.1" height="7" rx="2" stroke="none"/><path d="M1318 664 Q1318 667.3 1321.35 667.3 Q1324.7 667.3 1324.7 664" fill="none" stroke-width="0.9"/><line x1="1321.35" y1="667.3" x2="1321.35" y2="669.3" stroke-width="0.9"/><circle cx="1338.7" cy="661.1" r="2.2" stroke="none"/><path d="M1334.4 669 Q1334.4 665.6 1338.7 665.6 Q1343 665.6 1343 669 Z" stroke="none"/><rect x="1351.9" y="659.4" width="3.8" height="3.9" stroke="none"/><rect x="1357.6" y="659.6" width="3" height="3" transform="rotate(45 1359.1 661.1)" stroke="none"/><rect x="1351.9" y="664.5" width="3.8" height="4.3" stroke="none"/><rect x="1357.3" y="664.5" width="3.9" height="4.3" stroke="none"/></g></svg>
</body></html>
